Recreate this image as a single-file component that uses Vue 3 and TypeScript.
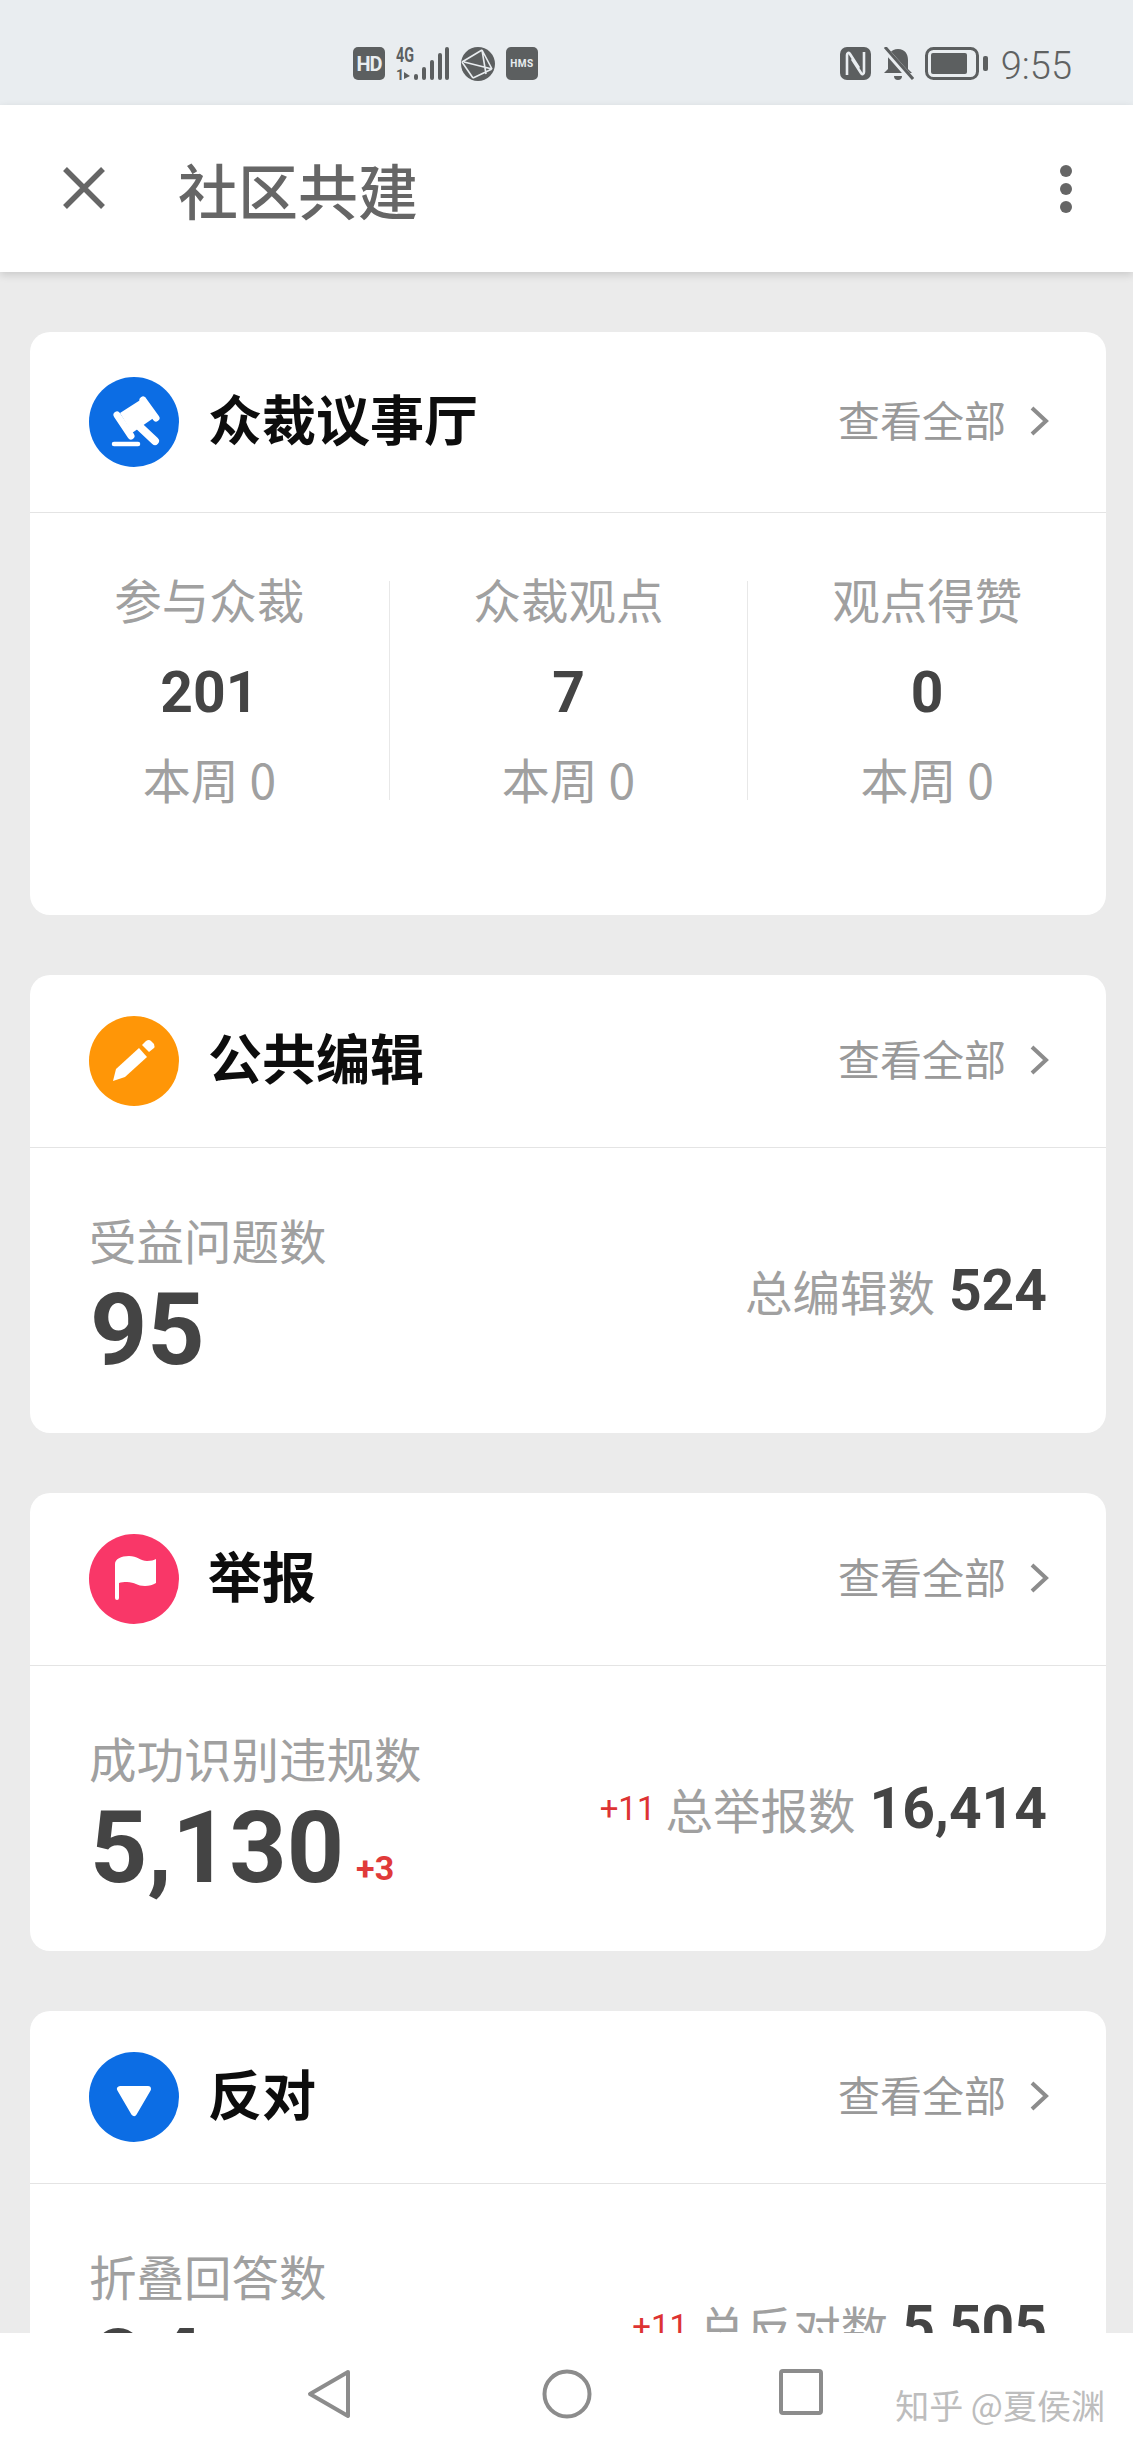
<script setup lang="ts">
interface Side { delta?: string; label: string; value: string }
interface Card {
  key: string; title: string; color: string; label: string; value: string; inc?: string; side: Side
}
const stats = [
  { label: '参与众裁', value: '201', week: '本周 0' },
  { label: '众裁观点', value: '7', week: '本周 0' },
  { label: '观点得赞', value: '0', week: '本周 0' },
]
const cards: Card[] = [
  { key: 'edit', title: '公共编辑', color: '#ff9607', label: '受益问题数', value: '95', side: { label: '总编辑数', value: '524' } },
  { key: 'flag', title: '举报', color: '#f93768', label: '成功识别违规数', value: '5,130', inc: '+3', side: { delta: '+11', label: '总举报数', value: '16,414' } },
  { key: 'down', title: '反对', color: '#0c6de4', label: '折叠回答数', value: '94', side: { delta: '+11', label: '总反对数', value: '5,505' } },
]
</script>

<template>
  <div class="phone">
    <div class="status">
      <div class="status-left">
        <svg width="32" height="33" viewBox="0 0 32 33"><rect width="32" height="33" rx="5" fill="#5c5f60"/><text x="16" y="24" text-anchor="middle" class="st hd">HD</text></svg>
        <svg class="sigicon" width="54" height="44" viewBox="0 -5 54 44">
          <text x="0" y="15" class="st sig" textLength="18" lengthAdjust="spacingAndGlyphs">4G</text>
          <text x="0" y="33" class="st sig2">1</text>
          <path d="M8 33V25l6 4-6 3" fill="#5c5f60"/>
          <rect x="18" y="27" width="4" height="6" rx="2" fill="#5c5f60"/>
          <rect x="26" y="20" width="4" height="13" rx="2" fill="#5c5f60"/>
          <rect x="34" y="13" width="4" height="20" rx="2" fill="#5c5f60"/>
          <rect x="42" y="6" width="4" height="27" rx="2" fill="#5c5f60"/>
          <rect x="49" y="0" width="4" height="33" rx="2" fill="#5c5f60"/>
        </svg>
        <svg width="34" height="34" viewBox="0 0 34 34"><circle cx="17" cy="17" r="17" fill="#5c5f60"/><path d="M1 15 21 3M1 15 12 31M21 3 31 22M21 3 25 27M3 15 31 22M12 31 31 22" stroke="#e9edf0" stroke-width="1.6" fill="none"/></svg>
        <svg width="32" height="33" viewBox="0 0 32 33"><rect width="32" height="33" rx="5" fill="#5c5f60"/><text x="16" y="20" text-anchor="middle" class="st hms">HMS</text></svg>
      </div>
      <div class="status-right">
        <svg width="31" height="33" viewBox="0 0 31 33"><rect width="31" height="33" rx="7" fill="#5c5f60"/><path d="M7 28V8c0-2 2-3 3-1l9 14M24 5v20c0 2-2 3-3 1L12 12" stroke="#e9edf0" stroke-width="2.6" fill="none"/></svg>
        <svg width="32" height="34" viewBox="0 0 32 34"><path d="M16 2c7 0 10 5 10 11v9l4 4H2l4-4v-9C6 7 9 2 16 2zM12 29h8a4 4 0 0 1-8 0z" fill="#5c5f60"/><path d="M2 1 30 33" stroke="#e9edf0" stroke-width="6"/><path d="M3 0 31 32" stroke="#5c5f60" stroke-width="3"/></svg>
        <svg width="63" height="33" viewBox="0 0 63 33"><rect x="1.5" y="1.5" width="51" height="30" rx="7" fill="none" stroke="#5c5f60" stroke-width="3"/><rect x="6" y="6" width="36" height="21" rx="2" fill="#5c5f60"/><rect x="58" y="9" width="5" height="15" rx="2" fill="#5c5f60"/></svg>
        <span class="time">9:55</span>
      </div>
    </div>

    <header class="nav">
      <svg class="close" width="42" height="42" viewBox="0 0 42 42"><path d="M2 2 40 40M40 2 2 40" stroke="#666" stroke-width="5.5" fill="none"/></svg>
      <h1 class="nav-title">社区共建</h1>
      <div class="dots"><i></i><i></i><i></i></div>
    </header>

    <main class="scroll">
      <section class="card">
        <div class="card-head tall">
          <span class="badge" style="background:#0c6de4">
            <svg width="90" height="90" viewBox="0 0 90 90" fill="#fff">
              <path d="M31 36 56 20 66 40 43 56z"/>
              <path d="M28 38 42 59M54 23 67 41" stroke="#fff" stroke-width="7" stroke-linecap="round"/>
              <path d="M50 49 66 64" stroke="#fff" stroke-width="8" stroke-linecap="round"/>
              <path d="M25 67H49" stroke="#fff" stroke-width="4.5" stroke-linecap="round"/>
            </svg>
          </span>
          <h2 class="card-title">众裁议事厅</h2>
          <span class="more">查看全部<svg width="20" height="30" viewBox="0 0 20 30"><path d="M3 2 17 15 3 28" stroke="#8c8c8c" stroke-width="4" fill="none"/></svg></span>
        </div>
        <div class="stats">
          <div v-for="s in stats" :key="s.label" class="stat">
            <div class="stat-label">{{ s.label }}</div>
            <div class="stat-value">{{ s.value }}</div>
            <div class="stat-week">{{ s.week }}</div>
          </div>
        </div>
      </section>

      <section v-for="c in cards" :key="c.key" class="card">
        <div class="card-head">
          <span class="badge" :style="{ background: c.color }">
            <svg v-if="c.key === 'edit'" width="90" height="90" viewBox="0 0 90 90" fill="#fff">
              <path d="M24 65 27 53 50 32 58 41 36 61z"/>
              <path d="M53 29 57 25Q60 23 62 25L65 28Q66 31 65 32L60 36z"/>
            </svg>
            <svg v-else-if="c.key === 'flag'" width="90" height="90" viewBox="0 0 90 90" fill="#fff">
              <path d="M26 30C26 25 32 22 40 22 48 22 52 27 58 27 62 27 65 26 67 25V49C64 51 60 52 56 52 48 52 46 48 38 48 35 48 32 48 30 49V64A2 2 0 0 1 26 64z"/>
            </svg>
            <svg v-else width="90" height="90" viewBox="0 0 90 90" fill="#fff" stroke="#fff" stroke-width="6" stroke-linejoin="round">
              <path d="M31 37H59L45 61z"/>
            </svg>
          </span>
          <h2 class="card-title">{{ c.title }}</h2>
          <span class="more">查看全部<svg width="20" height="30" viewBox="0 0 20 30"><path d="M3 2 17 15 3 28" stroke="#8c8c8c" stroke-width="4" fill="none"/></svg></span>
        </div>
        <div class="body">
          <div>
            <div class="label">{{ c.label }}</div>
            <div class="big">{{ c.value }}<span v-if="c.inc" class="inc">{{ c.inc }}</span></div>
          </div>
          <div class="side">
            <span v-if="c.side.delta" class="delta">{{ c.side.delta }}</span>
            <span class="side-label">{{ c.side.label }}</span>
            <span class="side-value">{{ c.side.value }}</span>
          </div>
        </div>
      </section>
    </main>

    <footer class="bottom">
      <svg width="44" height="50" viewBox="0 0 44 50"><path d="M41 3 3 25 41 47z" fill="none" stroke="#8c8c8c" stroke-width="4" stroke-linejoin="round"/></svg>
      <svg width="50" height="50" viewBox="0 0 50 50"><circle cx="25" cy="25" r="22.5" fill="none" stroke="#8c8c8c" stroke-width="4"/></svg>
      <svg width="44" height="46" viewBox="0 0 44 46"><rect x="2" y="2" width="40" height="42" rx="2" fill="none" stroke="#8c8c8c" stroke-width="4"/></svg>
      <span class="mark">知乎 @夏侯渊</span>
    </footer>
  </div>
</template>

<style>
html, body { margin: 0; background: #ebebeb; }
</style>

<style scoped>
.phone {
  width: 1133px; height: 2453px; display: flex; flex-direction: column; overflow: hidden;
  background: #ebebeb; font-family: "Noto Sans CJK SC", "Noto Sans", sans-serif; position: relative;
}
.status {
  height: 105px; flex: none; background: #e9edf0; display: flex; align-items: flex-start;
  justify-content: space-between; padding: 47px 61px 0 353px; box-sizing: border-box;
}
.status-left, .status-right { display: flex; align-items: flex-start; }
.status-left { gap: 11px; }
.status-right { gap: 11px; }
.sigicon { margin: -5px 0; }
.st { fill: #e9edf0; font-family: "Roboto", sans-serif; font-weight: 700; }
.hd { font-size: 20px; letter-spacing: -1px; }
.hms { font-size: 10px; letter-spacing: .5px; }
.sig { fill: #5c5f60; font-size: 20px; }
.sig2 { fill: #5c5f60; font-size: 14px; }
.time { font: 300 38px/33px "Roboto", sans-serif; color: #5f6262; margin-left: 2px; margin-top: 3px; }

.nav {
  height: 167px; flex: none; background: #fff; display: flex; align-items: center; box-sizing: border-box;
  padding: 0 61px 0 63px; box-shadow: 0 3px 8px rgba(0,0,0,.14); position: relative; z-index: 1;
}
.close { flex: none; margin-top: -1px; }
.nav-title { margin: 1px 0 0 73px; font-size: 60px; line-height: 80px; font-weight: 500; color: #666; flex: 1; }
.dots { display: flex; flex-direction: column; gap: 6px; }
.dots i { width: 12px; height: 12px; border-radius: 50%; background: #666; display: block; }

.scroll { flex: 1; min-height: 0; overflow: hidden; padding: 60px 27px 0 30px; }
.card { background: #fff; border-radius: 20px; margin-bottom: 60px; width: 1076px; }
.card-head {
  height: 172px; display: flex; align-items: center; padding: 0 57px 0 59px; border-bottom: 1px solid #e4e4e4;
}
.card-head.tall { height: 180px; }
.badge { width: 90px; height: 90px; border-radius: 50%; display: flex; align-items: center; justify-content: center; flex: none; }
.card-title { margin: -8px 0 0 29px; font-size: 54px; line-height: 70px; font-weight: 700; color: #0d0d0d; flex: 1; }
.more { display: flex; align-items: center; gap: 23px; font-size: 42px; line-height: 60px; color: #999; margin-top: -6px; }
.more svg { margin-top: 3px; }

.stats { display: grid; grid-template-columns: repeat(3, 1fr); padding: 68px 0 115px; }
.stat { text-align: center; height: 219px; border-left: 1px solid #e8e8e8; display: flex; flex-direction: column; align-items: center; }
.stat:first-child { border-left: 0; }
.stat-label { font-size: 47.5px; line-height: 66px; color: #a0a0a0; margin-top: -15px; }
.stat-value { font: 700 57px/70px "Roboto", sans-serif; color: #444; margin-top: 26px; }
.stat-week { font-size: 48px; line-height: 66px; color: #a0a0a0; margin-top: 17px; }

.body { height: 285px; display: flex; justify-content: space-between; align-items: center; padding: 0 59px; box-sizing: border-box; }
.body > div:first-child { align-self: flex-start; padding-top: 59px; }
.label { font-size: 47.5px; line-height: 66px; color: #a0a0a0; }
.big { font: 700 100px/100px "Roboto", sans-serif; color: #444; margin: 7px 0 0 1px; white-space: nowrap; }
.inc { font-size: 34px; color: #e03a3a; margin-left: 12px; vertical-align: 2px; }
.side { display: flex; align-items: center; white-space: nowrap; }
.delta { font: 400 33px/60px "Roboto", sans-serif; color: #d33; margin-right: 10px; }
.side-label { font-size: 47.5px; line-height: 60px; color: #a0a0a0; }
.side-value { font: 700 57px/60px "Roboto", sans-serif; color: #444; margin-left: 14px; }

.bottom { height: 120px; flex: none; background: #fff; position: relative; display: flex; align-items: flex-start; padding: 36px 0 0 307px; box-sizing: border-box; gap: 190px; }
.bottom svg:nth-child(2) { margin-left: 1px; }
.bottom svg:nth-child(3) { margin-left: -3px; }
.mark { position: absolute; right: 28px; top: 50px; font-size: 34px; line-height: 44px; color: #bdbdbd; white-space: nowrap; }
</style>
